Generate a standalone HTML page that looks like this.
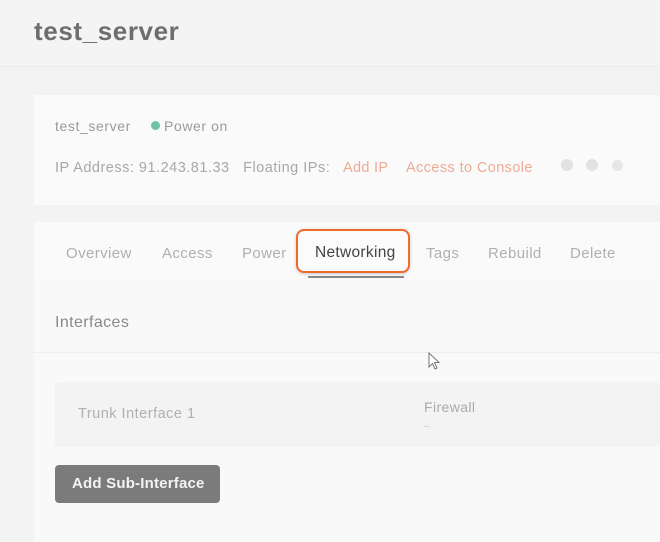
<!DOCTYPE html>
<html><head><style>
*{margin:0;padding:0;box-sizing:border-box}
body{width:660px;height:542px;overflow:hidden;background:#f3f3f3;font-family:"Liberation Sans",sans-serif;position:relative}
.a{position:absolute;white-space:nowrap}
</style></head><body>
<div class="a" style="left:0;top:0;width:660px;height:67px;background:#f4f4f4;border-bottom:1px solid #ececec"></div>
<div class="a" style="left:34px;top:16px;font-size:26px;font-weight:bold;color:#6e6e6e;letter-spacing:0.6px">test_server</div>
<div class="a" style="left:34px;top:95px;width:626px;height:110px;background:#fafafa"></div>
<div class="a" style="left:55px;top:118px;font-size:14px;color:#9a9a9a;letter-spacing:0.6px">test_server</div>
<div class="a" style="left:151px;top:121px;width:9px;height:9px;border-radius:50%;background:#6ec4a4"></div>
<div class="a" style="left:164px;top:118px;font-size:14px;color:#9a9a9a;letter-spacing:0.6px">Power on</div>
<div class="a" style="left:55px;top:160px;font-size:14.5px;color:#a8a8a8;letter-spacing:0.5px">IP Address: 91.243.81.33&nbsp;&nbsp;&nbsp;Floating IPs:</div>
<div class="a" style="left:343px;top:160px;font-size:14.5px;color:#ecab94;letter-spacing:0.3px">Add IP</div>
<div class="a" style="left:406px;top:160px;font-size:14.5px;color:#ecab94;letter-spacing:0.4px">Access to Console</div>
<div class="a" style="left:561px;top:159px;width:12px;height:12px;border-radius:50%;background:#e2e2e2"></div>
<div class="a" style="left:586px;top:159px;width:12px;height:12px;border-radius:50%;background:#e2e2e2"></div>
<div class="a" style="left:612px;top:160px;width:11px;height:11px;border-radius:50%;background:#e6e6e6"></div>
<div class="a" style="left:34px;top:222px;width:626px;height:320px;background:#fafafa"></div>
<div class="a" style="left:34px;top:280px;width:626px;height:262px;background:#f9f9f9"></div>
<div class="a" style="left:66px;top:245px;font-size:15px;color:#b0b0b0;letter-spacing:0.4px">Overview</div>
<div class="a" style="left:162px;top:245px;font-size:15px;color:#b0b0b0;letter-spacing:0.4px">Access</div>
<div class="a" style="left:242px;top:245px;font-size:15px;color:#b0b0b0;letter-spacing:0.4px">Power</div>
<div class="a" style="left:426px;top:245px;font-size:15px;color:#b0b0b0;letter-spacing:0.4px">Tags</div>
<div class="a" style="left:488px;top:245px;font-size:15px;color:#b0b0b0;letter-spacing:0.4px">Rebuild</div>
<div class="a" style="left:570px;top:245px;font-size:15px;color:#b0b0b0;letter-spacing:0.4px">Delete</div>
<div class="a" style="left:296px;top:229px;width:114px;height:44px;border:2.5px solid #f06a2a;border-radius:8px;background:#fbfbfb;box-shadow:0 1px 3px rgba(0,0,0,0.2)"></div>
<div class="a" style="left:315px;top:244px;font-size:15.5px;color:#444;letter-spacing:0.3px">Networking</div>
<div class="a" style="left:308px;top:276px;width:96px;height:2px;background:#888"></div>
<div class="a" style="left:55px;top:314px;font-size:16px;color:#8a8a8a;letter-spacing:0.4px">Interfaces</div>
<div class="a" style="left:34px;top:352px;width:626px;height:1px;background:#eeeeee"></div>
<div class="a" style="left:55px;top:382px;width:605px;height:65px;background:#f3f3f3;border-radius:4px"></div>
<div class="a" style="left:78px;top:406px;font-size:14.5px;color:#b0b0b0;letter-spacing:0.5px">Trunk Interface 1</div>
<div class="a" style="left:424px;top:399px;font-size:14px;color:#aaa;letter-spacing:0.4px">Firewall</div>
<div class="a" style="left:424px;top:421px;font-size:10px;color:#ccc">–</div>
<div class="a" style="left:55px;top:465px;width:165px;height:38px;background:#7b7b7b;border-radius:4px"></div>
<div class="a" style="left:72px;top:475px;font-size:15px;font-weight:bold;color:#f4f4f4;letter-spacing:0.2px">Add Sub-Interface</div>
<svg class="a" style="left:428px;top:352px" width="14" height="20" viewBox="0 0 14 20"><path d="M1 1 L1 15 L4.5 11.5 L7 17 L9 16 L6.5 10.5 L11 10.5 Z" fill="#fff" stroke="#777" stroke-width="1"/></svg>
</body></html>
